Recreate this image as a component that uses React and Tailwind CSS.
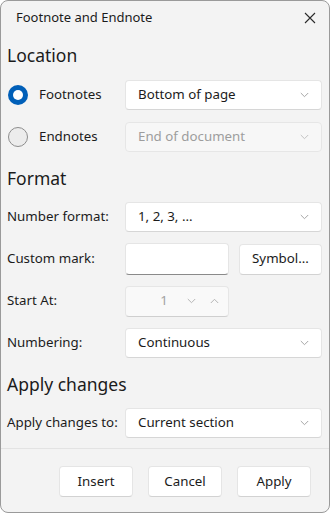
import React, { useState } from 'react';

const font = { fontFamily: '"Segoe UI", "Noto Sans", "Open Sans", sans-serif' };

function Chevron({ up = false, className = '' }) {
  return (
    <svg width="9" height="6" viewBox="0 0 9 6" className={className}>
      <path
        d={up ? 'M0.8 5 L4.5 1.3 L8.2 5' : 'M0.8 1 L4.5 4.7 L8.2 1'}
        fill="none"
        stroke="currentColor"
        strokeWidth="1"
      />
    </svg>
  );
}

function Select({ value, disabled = false }) {
  return (
    <div
      className={`flex-1 h-[30px] rounded-[4px] border flex items-center pl-3 pr-[12px] ${
        disabled
          ? 'bg-[#f7f7f7] border-[#e6e6e6] text-[#9d9d9d]'
          : 'bg-white border-[#e5e5e5] border-b-[#d6d6d6] text-[#1b1b1b]'
      }`}
    >
      <span className="flex-1 text-[13.3px] leading-none">{value}</span>
      <Chevron className={disabled ? 'text-[#c2c2c2]' : 'text-[#a6a6a6]'} />
    </div>
  );
}

function Radio({ checked }) {
  return checked ? (
    <div className="w-[20px] h-[20px] rounded-full bg-[#005fb8] flex items-center justify-center">
      <div className="w-[10px] h-[10px] rounded-full bg-white" />
    </div>
  ) : (
    <div className="w-[20px] h-[20px] rounded-full bg-[#ececec] border border-[#8d8d8d]" />
  );
}

function Button({ children, className = '' }) {
  return (
    <button
      className={`h-[31px] rounded-[4px] bg-white border border-[#e5e5e5] border-b-[#d2d2d2] text-[13.3px] text-[#1b1b1b] ${className}`}
    >
      {children}
    </button>
  );
}

function Row({ label, children }) {
  return (
    <div className="flex items-center h-[30px]">
      <div className="w-[118px] text-[13.3px] text-[#1b1b1b]">{label}</div>
      {children}
    </div>
  );
}

export default function App() {
  const [location, setLocation] = useState('footnotes');

  return (
    <div className="w-[330px] h-[513px] bg-white" style={font}>
      <div className="w-full h-full bg-[#f3f3f3] border border-[#9a9a9a] rounded-[8px] flex flex-col overflow-hidden">
        <div className="h-[33px] flex items-center pl-[15px] pr-[13px]">
          <span className="flex-1 text-[13px] text-[#1b1b1b]">Footnote and Endnote</span>
          <svg width="12" height="12" viewBox="0 0 12 12" className="text-[#2b2b2b]">
            <path d="M1 1 L11 11 M11 1 L1 11" stroke="currentColor" strokeWidth="1.1" />
          </svg>
        </div>

        <div className="flex flex-col px-[6px] pr-[7px]">
          <div className="mt-[9px] h-[24px] text-[17.5px] leading-[24px] text-[#1b1b1b]">Location</div>

          <div className="mt-[13px] flex items-center h-[30px]" onClick={() => setLocation('footnotes')}>
            <div className="w-[118px] flex items-center">
              <div className="ml-[1px]">
                <Radio checked={location === 'footnotes'} />
              </div>
              <span className="ml-[11px] text-[13.3px] text-[#1b1b1b]">Footnotes</span>
            </div>
            <Select value="Bottom of page" />
          </div>

          <div className="mt-[12px] flex items-center h-[30px]" onClick={() => setLocation('endnotes')}>
            <div className="w-[118px] flex items-center">
              <div className="ml-[1px]">
                <Radio checked={location === 'endnotes'} />
              </div>
              <span className="ml-[11px] text-[13.3px] text-[#1b1b1b]">Endnotes</span>
            </div>
            <Select value="End of document" disabled={location !== 'endnotes'} />
          </div>

          <div className="mt-[14px] h-[24px] text-[17.5px] leading-[24px] text-[#1b1b1b]">Format</div>

          <div className="mt-[12px] flex flex-col gap-[12px]">
            <Row label="Number format:">
              <Select value="1, 2, 3, ..." />
            </Row>
            <Row label="Custom mark:">
              <div className="w-[104px] h-[32px] rounded-[4px] bg-white border border-[#e5e5e5] border-b-[#8a8a8a]" />
              <Button className="ml-[10px] flex-1">Symbol...</Button>
            </Row>
            <Row label="Start At:">
              <div className="w-[104px] h-[31px] rounded-[4px] bg-[#f9f9f9] border border-[#e6e6e6] border-b-[#cfcfcf] flex items-center text-[#a3a3a3]">
                <span className="ml-[33px] w-[10px] text-[13.3px] text-center">1</span>
                <Chevron className="ml-[18px] text-[#b5b5b5]" />
                <Chevron up className="ml-[14px] text-[#b5b5b5]" />
              </div>
            </Row>
            <Row label="Numbering:">
              <Select value="Continuous" />
            </Row>
          </div>

          <div className="mt-[14px] h-[24px] text-[17.5px] leading-[24px] text-[#1b1b1b]">Apply changes</div>

          <div className="mt-[12px]">
            <Row label="Apply changes to:">
              <Select value="Current section" />
            </Row>
          </div>
        </div>

        <div className="mt-[10px] border-t border-[#e3e3e3] flex-1 flex items-start justify-end pt-[17px] pr-[18px] gap-[15px]">
          <Button className="w-[74px]">Insert</Button>
          <Button className="w-[74px]">Cancel</Button>
          <Button className="w-[74px]">Apply</Button>
        </div>
      </div>
    </div>
  );
}
